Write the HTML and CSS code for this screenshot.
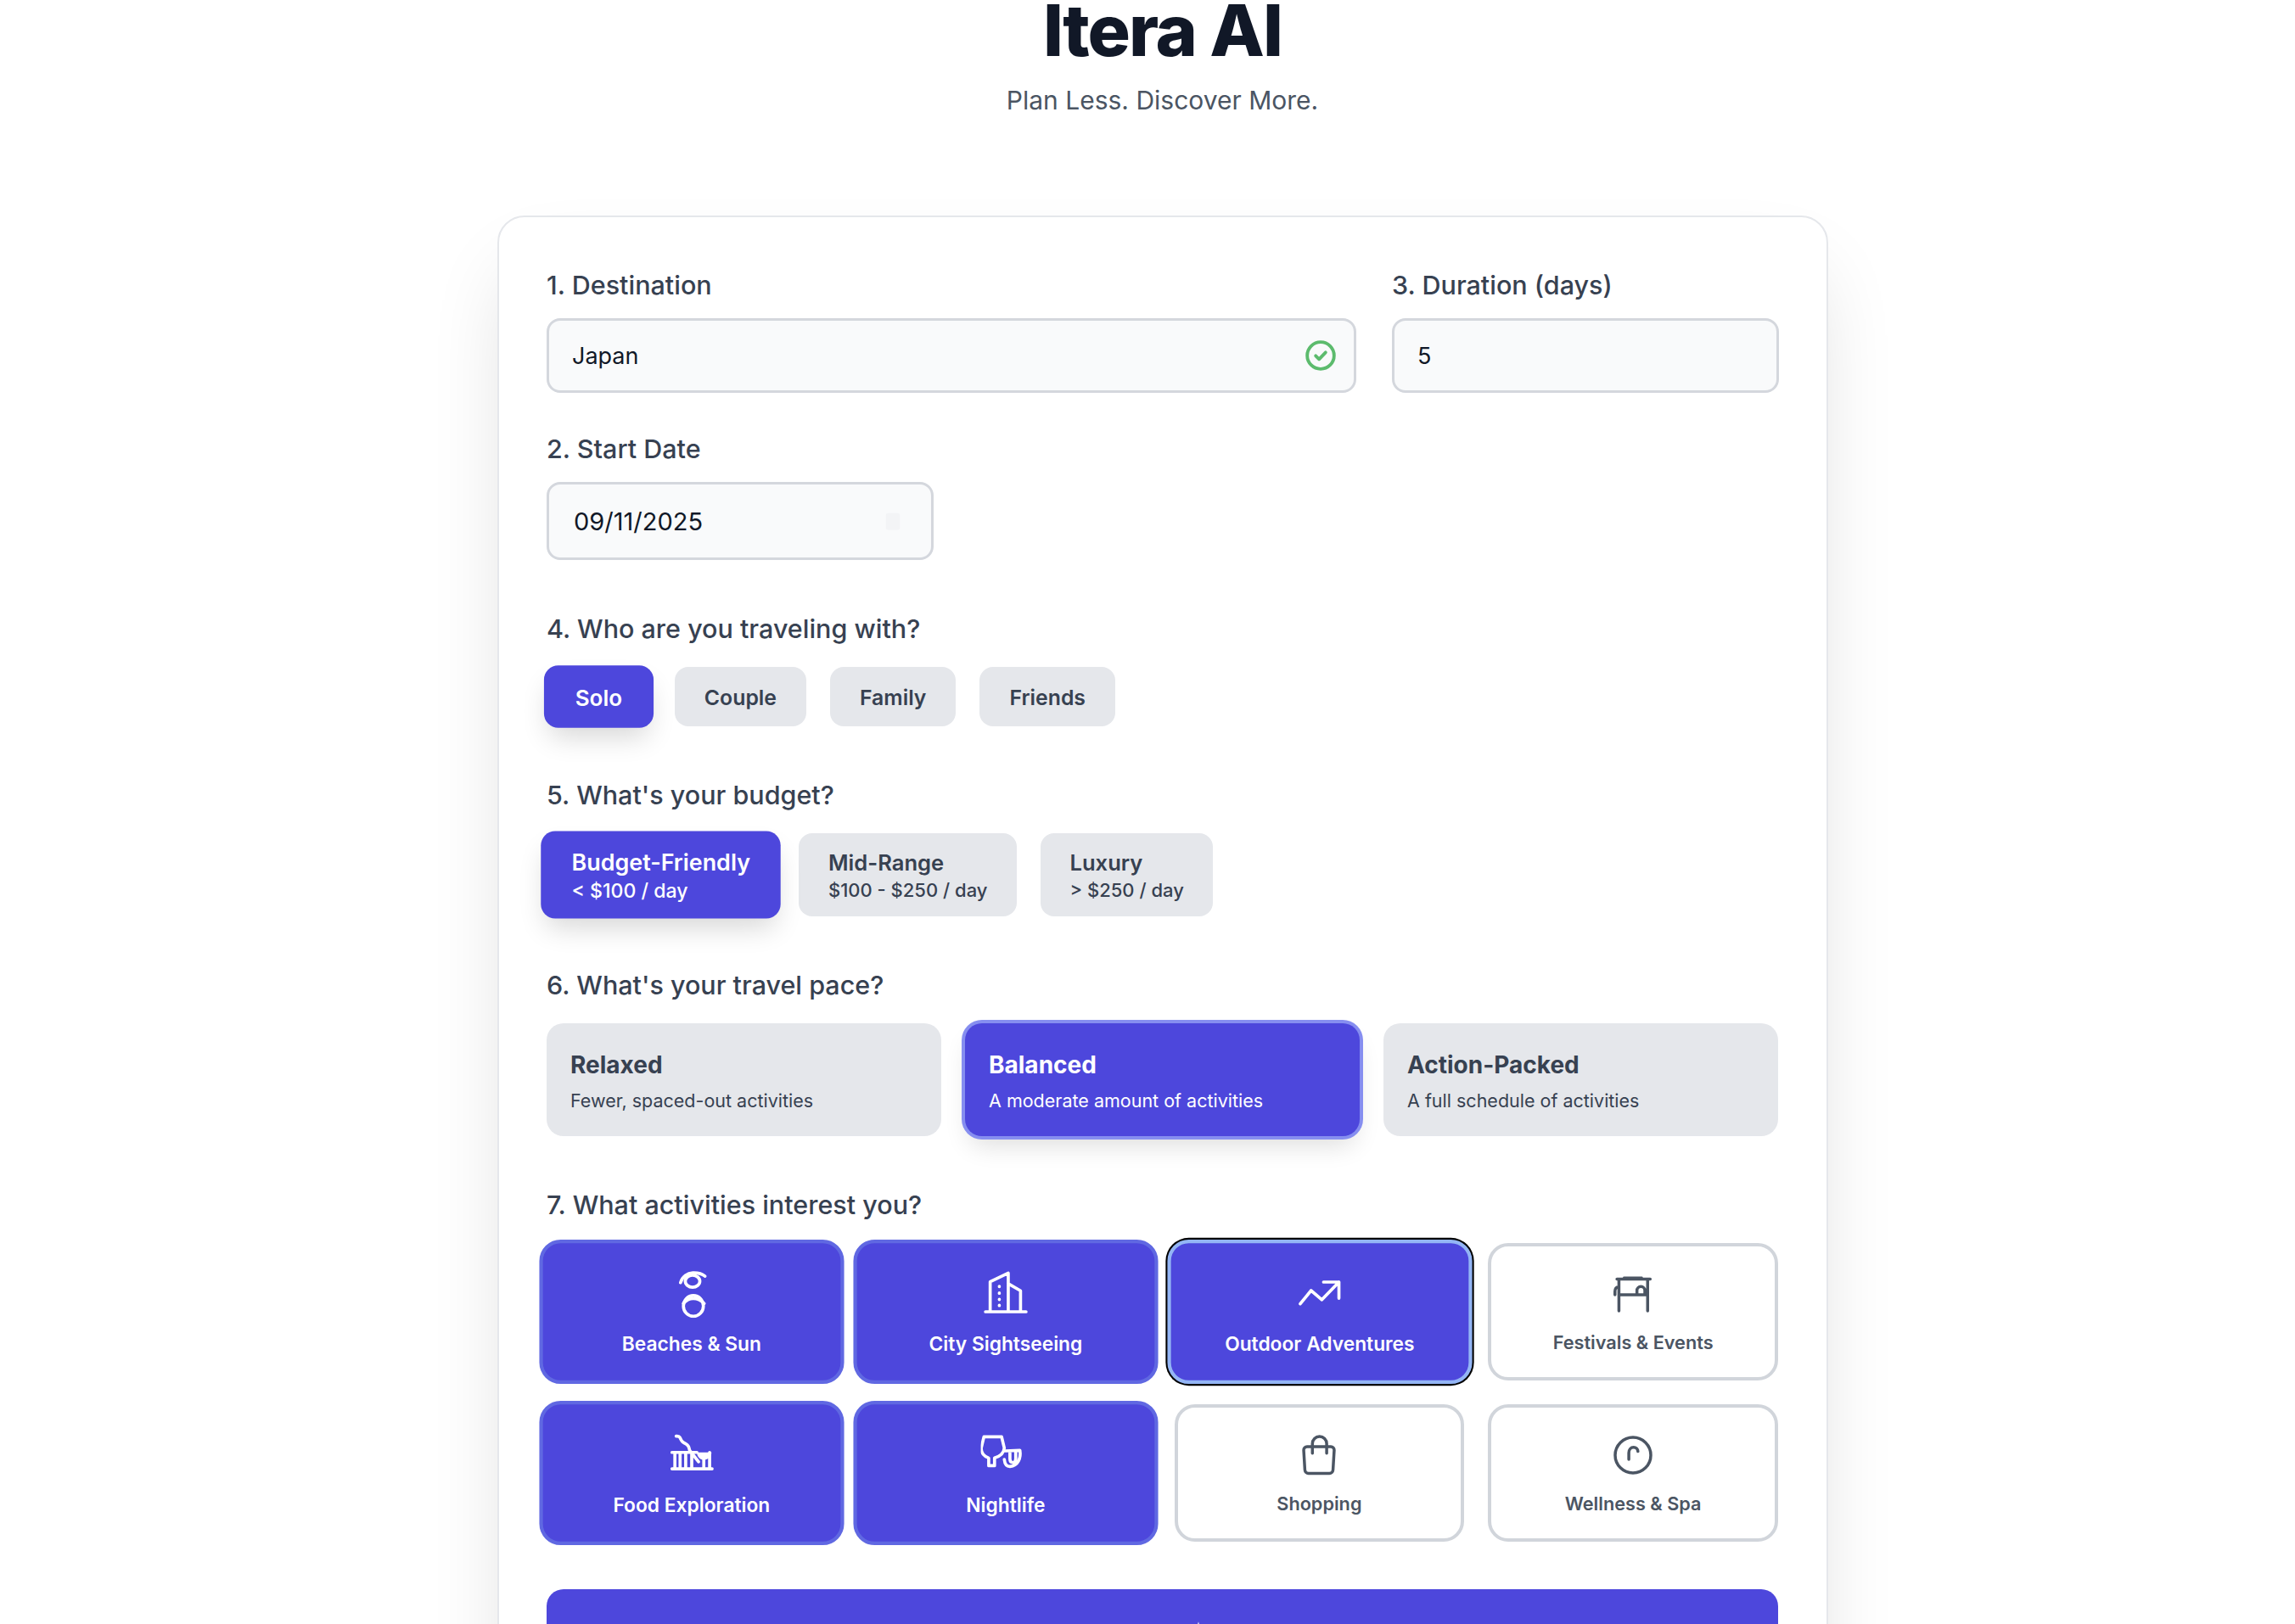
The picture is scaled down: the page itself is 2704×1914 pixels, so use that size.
FILE: index.html
```html
<!DOCTYPE html>
<html lang="en">
<head>
  <meta charset="UTF-8">
  <meta name="viewport" content="width=device-width, initial-scale=1.0">
  <title>Itera AI</title>
  <link rel="stylesheet" href="styles.css">
</head>
<body>
  <main class="page">
    <header class="hero">
      <h1>Itera AI</h1>
      <p>Plan Less. Discover More.</p>
    </header>

    <form class="card">
      <div class="top-grid">
        <div class="field field-wide">
          <label for="destination">1. Destination</label>
          <div class="input-wrap">
            <input type="text" id="destination" value="Japan">
            <svg class="check" viewBox="0 0 24 24" fill="none" stroke="currentColor" stroke-width="2.3" stroke-linecap="round" stroke-linejoin="round"><circle cx="12" cy="12" r="9.500"/><path d="m8.500 12.200 2.400 2.400 4.600-4.800"/></svg>
          </div>
        </div>
        <div class="field">
          <label for="duration">3. Duration (days)</label>
          <input type="text" id="duration" value="5">
        </div>
        <div class="field">
          <label for="start">2. Start Date</label>
          <div class="input-wrap">
            <input type="text" id="start" class="date" value="09/11/2025">
            <svg class="calendar" viewBox="0 0 24 24" fill="currentColor"><rect x="5" y="4" width="14" height="17" rx="2"/></svg>
          </div>
        </div>
      </div>

      <section class="group">
        <h2>4. Who are you traveling with?</h2>
        <div class="chips">
          <button type="button" class="chip on">Solo</button>
          <button type="button" class="chip">Couple</button>
          <button type="button" class="chip">Family</button>
          <button type="button" class="chip">Friends</button>
        </div>
      </section>

      <section class="group">
        <h2>5. What's your budget?</h2>
        <div class="chips">
          <button type="button" class="chip chip-two on"><b>Budget-Friendly</b><small>&lt; $100 / day</small></button>
          <button type="button" class="chip chip-two"><b>Mid-Range</b><small>$100 - $250 / day</small></button>
          <button type="button" class="chip chip-two"><b>Luxury</b><small>&gt; $250 / day</small></button>
        </div>
      </section>

      <section class="group">
        <h2>6. What's your travel pace?</h2>
        <div class="paces">
          <button type="button" class="pace"><b>Relaxed</b><small>Fewer, spaced-out activities</small></button>
          <button type="button" class="pace on"><b>Balanced</b><small>A moderate amount of activities</small></button>
          <button type="button" class="pace"><b>Action-Packed</b><small>A full schedule of activities</small></button>
        </div>
      </section>

      <section class="group">
        <h2>7. What activities interest you?</h2>
        <div class="activities">
          <button type="button" class="activity on">
            <svg viewBox="0 0 24 24"><ellipse cx="12.400" cy="6.300" rx="3.500" ry="2.900"/><path d="M6.600 7C7.500 4 10 2.400 12.500 2.300c2.300-.1 4.400.4 5.900 1.600"/><ellipse cx="12.800" cy="18.200" rx="4.800" ry="5"/><path d="M8 17c1.300-1.600 3-2.400 4.800-2.400s3.600.8 5.200 2.400"/></svg>
            <span>Beaches &amp; Sun</span>
          </button>
          <button type="button" class="activity on">
            <svg viewBox="0 0 24 24"><path d="M2.250 21h19.500M4.500 21V6.600l8.700-4.200V21M13.200 7.500l5.900 3.400V21M8.900 8.800v.1M8.900 12v.1M8.900 15v.1M8.900 17.900v.1"/></svg>
            <span>City Sightseeing</span>
          </button>
          <button type="button" class="activity on focused">
            <svg viewBox="0 0 24 24"><path d="M2.600 17.200l5.200-6.400 5.200 4.400 8.200-8.500M13.800 6.700h7.400v7.800"/></svg>
            <span>Outdoor Adventures</span>
          </button>
          <button type="button" class="activity">
            <svg viewBox="0 0 24 24"><path d="M3.900 4.500h16.800M4.900 4.500v16.100M19.400 4.500v16.100M4.900 12.400h14.500M4.900 8.200c-1.300.3-2 1.300-2 2.500v1.700M14 12.200v-1.900a2 2 0 0 1 4 0v1.900"/><rect class="solid" x="6.900" y="3.200" width="10.100" height="1.300" rx=".6"/></svg>
            <span>Festivals &amp; Events</span>
          </button>
          <button type="button" class="activity on">
            <svg viewBox="0 0 24 24"><path d="M4.500 3.300c.8-.1 1.500 0 1.800.6.400 1 .8 1.900 1.800 2.500 1.300.6 2.200 1.300 2.500 2.200l.4 1.500 4.300 5.500M2.500 19h19.300M2.500 11.100h12M3.900 11.100V19M6.400 11.100V19M9.100 11.100V19M12 11.100V19M17.800 14.500V19M20.600 11.100V19"/><path class="solid" d="M14.500 11.100h7c0 1.700-1.300 3.400-3.500 3.600-2 0-3.500-1.500-3.500-3.600Z"/></svg>
            <span>Food Exploration</span>
          </button>
          <button type="button" class="activity on">
            <svg viewBox="0 0 24 24"><path d="M1.500 3.600H10l1.300 5.400c-.2 2.400-2.200 4-4.700 4.800v3.700H3.800v-3.700C1.600 13 .1 11.200.2 9Z"/><path d="M11.800 10.400l7-.3c.6 3.700-.8 7.300-4.800 7.800-1.600 0-2.500-1.400-2.700-3.400M14 11v3.200c0 1.200.6 1.800 1.400 1.800s1.400-.7 1.400-1.800v-3.800"/></svg>
            <span>Nightlife</span>
          </button>
          <button type="button" class="activity">
            <svg viewBox="0 0 24 24"><path d="M6 7.700h12a1.700 1.700 0 0 1 1.700 1.800l-.6 10a1.800 1.800 0 0 1-1.800 1.700H6.700a1.800 1.800 0 0 1-1.800-1.700l-.6-10A1.700 1.700 0 0 1 6 7.700ZM8.700 11V6.200a3.600 3.600 0 0 1 7.200 0V11"/></svg>
            <span>Shopping</span>
          </button>
          <button type="button" class="activity">
            <svg viewBox="0 0 24 24"><circle cx="12" cy="12" r="9"/><path d="M9.900 14.100v-3.300c0-1.600 1-2.800 2.400-2.800 1.200 0 2.100.9 2.200 2.100"/></svg>
            <span>Wellness &amp; Spa</span>
          </button>
        </div>
      </section>

      <button type="submit" class="submit">
        <svg viewBox="0 0 24 24" fill="currentColor"><path d="M12 2l2.200 7.800L22 12l-7.800 2.200L12 22l-2.200-7.800L2 12l7.800-2.200Z"/></svg>
      </button>
    </form>
  </main>
</body>
</html>
```

FILE: styles.css
```css
html, body {
  margin: 0;
  height: 100%;
  overflow: hidden;
}

body {
  background: #fff;
  font-family: Inter, "Noto Sans", sans-serif;
  color: #374151;
}

button, input {
  font-family: inherit;
}

.page {
  width: 1568px;
  margin-left: 585.500px;
}

.hero {
  height: 254px;
  text-align: center;
}

.hero h1 {
  margin: 0;
  font-size: 84px;
  line-height: 72px;
  font-weight: 800;
  letter-spacing: -2px;
  color: #111827;
}

.hero p {
  margin: 24px 0 0;
  font-size: 30px;
  line-height: 44px;
  color: #4b5563;
}

.card {
  box-sizing: border-box;
  background: #fff;
  border: 2px solid #e5e7eb;
  border-radius: 32px;
  padding: 57px 56.500px 60px;
  box-shadow: 0 50px 100px -24px rgba(0, 0, 0, .16);
}

.top-grid {
  display: grid;
  grid-template-columns: repeat(3, 456px);
  column-gap: 42px;
  row-gap: 43px;
}

.field-wide {
  grid-column: span 2;
}

label, h2 {
  display: block;
  margin: 0 0 16px;
  font-size: 30.500px;
  line-height: 46px;
  font-weight: 500;
  color: #374151;
}

.input-wrap {
  position: relative;
}

input {
  display: block;
  box-sizing: border-box;
  width: 100%;
  height: 88px;
  padding: 0 27px;
  background: #f9fafb;
  border: 3px solid #d4d7dd;
  border-radius: 16px;
  font-size: 27px;
  color: #111827;
}

input.date {
  height: 92px;
  font-size: 29px;
  padding: 0 29px;
}

.check {
  position: absolute;
  right: 22px;
  top: 24px;
  width: 40px;
  height: 40px;
  color: #5cbb6d;
}

.calendar {
  position: absolute;
  right: 34px;
  top: 32px;
  width: 28px;
  height: 28px;
  color: #f3f4f6;
}

.group {
  margin-top: 58px;
}

.group h2 {
  margin-bottom: 22px;
}

.chips {
  display: flex;
  gap: 28px;
}

.chip {
  height: 70px;
  padding: 2px 35px 0;
  border: 0;
  border-radius: 16px;
  background: #e5e7eb;
  color: #374151;
  font-size: 24.800px;
  font-weight: 600;
}

.chip-two {
  height: 98px;
  padding: 2px 34.500px 0;
  display: flex;
  flex-direction: column;
  justify-content: center;
  align-items: flex-start;
}

.chip-two b {
  font-size: 25.600px;
  line-height: 34px;
  font-weight: 600;
}

.chip-two small {
  font-size: 22px;
  line-height: 30px;
  font-weight: 500;
}

.chip.on {
  background: #4d47dc;
  color: #fff;
  transform: scale(1.05);
  box-shadow: 0 16px 30px -6px rgba(0, 0, 0, .16);
}

.paces {
  display: grid;
  grid-template-columns: repeat(3, 1fr);
  gap: 28px;
}

.pace {
  height: 133px;
  padding: 2px 28px 0;
  border: 0;
  border-radius: 20px;
  background: #e5e7eb;
  color: #374151;
  text-align: left;
}

.pace b {
  display: block;
  font-size: 28px;
  line-height: 40px;
  font-weight: 700;
}

.pace small {
  display: block;
  margin-top: 6px;
  font-size: 21.500px;
  line-height: 32px;
  font-weight: 400;
}

.pace.on {
  background: #4d47dc;
  color: #fff;
  box-shadow: 0 0 0 4px #868ef0, 0 16px 30px -6px rgba(0, 0, 0, .14);
}

.activities {
  display: grid;
  grid-template-columns: repeat(4, 1fr);
  gap: 28px;
}

.activity {
  display: flex;
  flex-direction: column;
  align-items: center;
  gap: 12px;
  box-sizing: border-box;
  height: 162px;
  padding: 28px 8px 24px;
  background: #fff;
  border: 4px solid #d1d5db;
  border-radius: 24px;
  color: #4b5563;
}

.activity svg {
  width: 56px;
  height: 56px;
  fill: none;
  stroke: currentColor;
  stroke-width: 1.500;
  stroke-linecap: round;
  stroke-linejoin: round;
}

.activity svg .solid {
  fill: currentColor;
  stroke: none;
}

.activity span {
  font-size: 21.700px;
  line-height: 34px;
  font-weight: 600;
}

.activity.on {
  background: #4d47dc;
  border-color: #6068e2;
  color: #fff;
  transform: scale(1.05);
}

.activity.focused {
  border-color: #93b5f5;
  box-shadow: 0 0 0 2px #000;
}

.submit {
  display: flex;
  justify-content: center;
  width: 100%;
  height: 120px;
  margin-top: 56px;
  padding: 35px 0 0 84px;
  border: 0;
  border-radius: 20px;
  background: #4d47dc;
  color: #fff;
}

.submit svg {
  width: 40px;
  height: 40px;
}
```
